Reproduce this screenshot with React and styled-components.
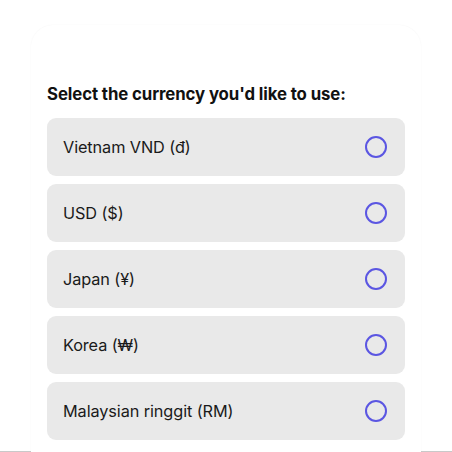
import React from 'react';
import styled, { createGlobalStyle } from 'styled-components';

const GlobalStyle = createGlobalStyle`
  html, body {
    margin: 0;
    padding: 0;
    background: #ffffff;
  }
  * {
    box-sizing: border-box;
  }
`;

const Screen = styled.div`
  position: relative;
  width: 452px;
  height: 452px;
  overflow: hidden;
  display: flex;
  flex-direction: column;
  align-items: center;
  padding-top: 25px;
  font-family: 'Inter', 'Liberation Sans', sans-serif;

  &::after {
    content: '';
    position: absolute;
    left: 0;
    right: 0;
    bottom: 0;
    height: 1px;
    background: #c9c9c9;
  }
`;

const Sheet = styled.div`
  position: relative;
  z-index: 1;
  flex: 1;
  width: 390px;
  background: #ffffff;
  border-radius: 22px 22px 0 0;
  box-shadow: 0 0 1.5px rgba(0, 0, 0, 0.05);
  padding: 59px 16px 0;
`;

const Title = styled.h2`
  margin: 0 0 13px;
  font-size: 16.8px;
  font-weight: 700;
  line-height: 21px;
  color: #111111;
  letter-spacing: -0.1px;
`;

const OptionList = styled.div`
  display: flex;
  flex-direction: column;
  gap: 8px;
`;

const Option = styled.label`
  display: flex;
  align-items: center;
  justify-content: space-between;
  height: 58px;
  padding: 0 18px 0 16px;
  background: #e9e9e9;
  border-radius: 9px;
  cursor: pointer;

  span {
    font-size: 16.3px;
    color: #1a1a1a;
    letter-spacing: -0.1px;
  }
`;

const Radio = styled.span`
  width: 22px;
  height: 22px;
  border-radius: 50%;
  border: 2px solid #5b56e2;
  background: transparent;
`;

const currencies = [
  'Vietnam VND (đ)',
  'USD ($)',
  'Japan (¥)',
  'Korea (₩)',
  'Malaysian ringgit (RM)',
];

export default function App() {
  return (
    <>
      <GlobalStyle />
      <Screen>
        <Sheet>
          <Title>Select the currency you'd like to use:</Title>
          <OptionList>
            {currencies.map((c) => (
              <Option key={c}>
                <span>{c}</span>
                <Radio />
              </Option>
            ))}
          </OptionList>
        </Sheet>
      </Screen>
    </>
  );
}
